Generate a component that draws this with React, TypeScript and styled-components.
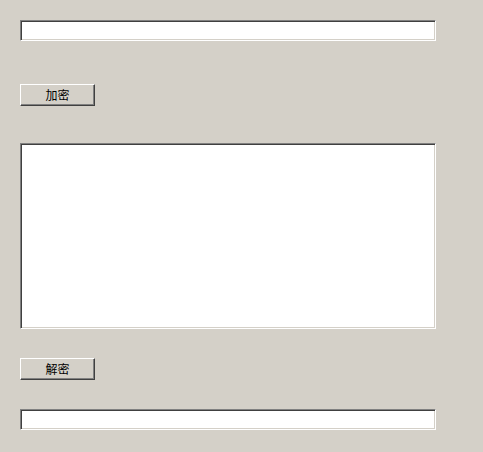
import React from "react";
import styled, { createGlobalStyle } from "styled-components";

const Global = createGlobalStyle`
  html, body {
    margin: 0;
    padding: 0;
    background: #d4d0c8;
  }
  * { box-sizing: border-box; }
`;

const Page = styled.div`
  width: 483px;
  height: 452px;
  background: #d4d0c8;
  padding: 20px 0 0 20px;
  display: flex;
  flex-direction: column;
  align-items: flex-start;
  font-family: "Noto Sans CJK SC", "Noto Sans", sans-serif;
`;

const sunken = `
  border-style: solid;
  border-width: 1px;
  border-color: #808080 #ffffff #ffffff #808080;
  box-shadow: inset 1px 1px 0 #404040, inset -1px -1px 0 #d4d0c8;
  background: #ffffff;
  outline: none;
  margin: 0;
  padding: 2px 3px;
  font-family: "Noto Sans CJK SC", "Noto Sans", sans-serif;
  font-size: 12px;
  color: #000;
`;

const TextField = styled.input<{ $top?: number }>`
  ${sunken}
  display: block;
  width: 416px;
  height: 21px;
  margin-top: ${(p) => p.$top ?? 0}px;
`;

const TextBox = styled.textarea<{ $top?: number }>`
  ${sunken}
  display: block;
  width: 416px;
  height: 186px;
  resize: none;
  margin-top: ${(p) => p.$top ?? 0}px;
`;

const Button = styled.button<{ $top?: number }>`
  display: flex;
  align-items: center;
  justify-content: center;
  width: 75px;
  height: 22px;
  margin: ${(p) => p.$top ?? 0}px 0 0 0;
  padding: 0;
  background: #d4d0c8;
  border-style: solid;
  border-width: 1px;
  border-color: #ffffff #404040 #404040 #ffffff;
  box-shadow: inset -1px -1px 0 #808080;
  font-family: "Noto Sans CJK SC", "Noto Sans", sans-serif;
  font-size: 12px;
  line-height: 1;
  color: #000;
  cursor: default;
`;

export default function App() {
  return (
    <>
      <Global />
      <Page>
        <TextField type="text" />
        <Button $top={43}>加密</Button>
        <TextBox $top={37} />
        <Button $top={29}>解密</Button>
        <TextField type="text" $top={29} />
      </Page>
    </>
  );
}
